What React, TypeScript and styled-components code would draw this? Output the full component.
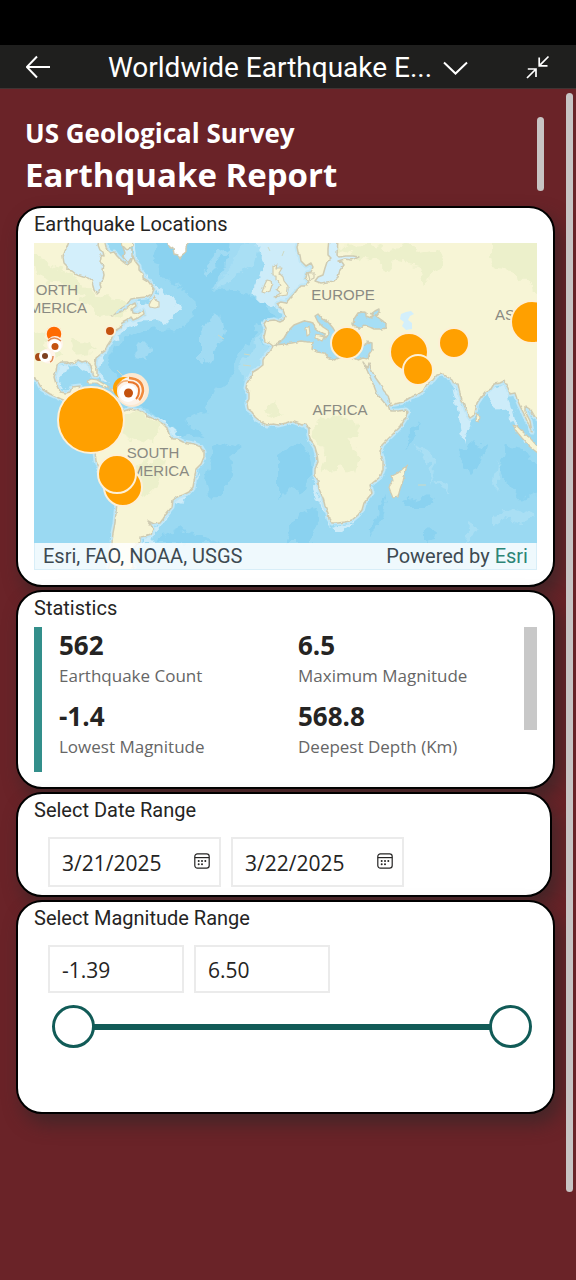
import React, { useState } from "react";
import styled, { createGlobalStyle } from "styled-components";

const GlobalStyle = createGlobalStyle`
  *, *::before, *::after { box-sizing: border-box; }
  body {
    margin: 0;
    background: #6a2328;
    color: #252423;
    font-family: "Open Sans", "Noto Sans", sans-serif;
  }
  h1, h2, p, dl, dd, dt { margin: 0; font-weight: inherit; }
  button { border: 0; padding: 0; background: none; color: inherit; font: inherit; cursor: pointer; }
`;

const Screen = styled.div`
  min-height: 100vh;
  display: flex;
  flex-direction: column;
`;

const StatusBar = styled.div`
  height: 45px;
  background: #000;
`;

const AppBar = styled.header`
  display: flex;
  align-items: center;
  height: 44px;
  padding: 0 26px;
  background: #1f1f1e;
  border-bottom: 1px solid #403433;
  color: #fff;
`;

const IconButton = styled.button`
  display: flex;
  align-items: center;
  justify-content: center;
`;

const TitleButton = styled.button`
  flex: 1;
  display: flex;
  align-items: center;
  justify-content: center;
  gap: 11px;
  padding-top: 2px;
  font-family: Roboto, sans-serif;
  font-size: 28px;
  line-height: 36px;
  white-space: nowrap;
`;

const Report = styled.div`
  flex: 1;
  display: flex;
  align-items: flex-start;
  gap: 11px;
  padding: 0 3px 0 16px;
`;

const Content = styled.main`
  flex: 1;
  min-width: 0;
  display: flex;
  flex-direction: column;
  gap: 3px;
`;

const PageScrollThumb = styled.div`
  width: 7px;
  height: 1099px;
  margin-top: 4px;
  border-radius: 4px;
  background: #c8c4c4;
  position: relative;
`;

const ReportHeader = styled.div`
  display: flex;
  justify-content: space-between;
  align-items: flex-start;
  padding: 26px 11px 4px 9px;
  color: #fff;
  font-weight: 700;
`;

const Agency = styled.p`
  font-size: 26px;
  line-height: 36px;
`;

const ReportTitle = styled.h1`
  font-size: 33px;
  line-height: 48px;
  font-weight: 700;
`;

const HeaderScrollThumb = styled.div`
  width: 7px;
  height: 74px;
  margin-top: 2px;
  border-radius: 4px;
  background: #c8c4c4;
`;

const Card = styled.section<{ $bottom: number; $inset?: number }>`
  margin-right: ${(p) => p.$inset ?? 0}px;
  padding: 4px 16px ${(p) => p.$bottom}px;
  border: 2px solid #000;
  border-radius: 26px;
  background: #fff;
  box-shadow: 6px 10px 18px rgba(52, 38, 40, 0.7);
`;

const CardTitle = styled.h2`
  font-family: Roboto, sans-serif;
  font-size: 20px;
  line-height: 24px;
`;

const MapFrame = styled.div`
  position: relative;
  margin-top: 7px;
  background: #9ad9f2;
`;

const MapDrawing = styled.svg`
  display: block;
  width: 100%;
`;

const Attribution = styled.div`
  position: absolute;
  left: 0;
  right: 0;
  bottom: 0;
  display: flex;
  justify-content: space-between;
  padding: 0 8px;
  background: rgba(255, 255, 255, 0.84);
  border: 1px solid #d8eef8;
  border-top: 0;
  color: #3d4a52;
  font-family: Roboto, sans-serif;
  font-size: 20px;
  line-height: 26px;
`;

const EsriLink = styled.a`
  color: #2c8577;
  text-decoration: none;
`;

const StatsPanel = styled.div`
  display: flex;
  align-items: flex-start;
  margin-top: 7px;
`;

const AccentBar = styled.div`
  width: 8px;
  height: 145px;
  margin-right: 17px;
  background: #338f8b;
`;

const StatsGrid = styled.dl`
  flex: 1;
  display: grid;
  grid-template-columns: 239px 1fr;
  row-gap: 10px;
`;

const Stat = styled.div`
  display: flex;
  flex-direction: column-reverse;
`;

const StatValue = styled.dd`
  font-size: 26px;
  line-height: 37px;
  font-weight: 700;
`;

const StatLabel = styled.dt`
  font-size: 17px;
  line-height: 24px;
  color: #666;
`;

const StatsScrollThumb = styled.div`
  width: 13px;
  height: 103px;
  background: #c8c8c8;
`;

const FieldRow = styled.div`
  display: flex;
  gap: 10px;
  margin-top: 15px;
  padding-left: 14px;
`;

const Field = styled.div<{ $width: number; $height: number }>`
  display: flex;
  align-items: center;
  width: ${(p) => p.$width}px;
  height: ${(p) => p.$height}px;
  padding: 0 9px 0 12px;
  border: 2px solid #ebebeb;
`;

const FieldInput = styled.input`
  flex: 1;
  min-width: 0;
  height: 100%;
  padding: 1px 0 0;
  border: 0;
  outline: 0;
  background: transparent;
  color: #252423;
  font-family: "Open Sans", "Noto Sans", sans-serif;
  font-size: 21px;
`;

const SliderGroup = styled.div`
  display: grid;
  align-items: center;
  margin: 12px 5px 0 18px;
`;

const SliderTrack = styled.div`
  grid-area: 1 / 1;
  height: 6px;
  margin: 0 20px;
  background: #115b57;
`;

const SliderInput = styled.input`
  grid-area: 1 / 1;
  width: 100%;
  height: 43px;
  margin: 0;
  appearance: none;
  background: transparent;
  pointer-events: none;

  &::-webkit-slider-runnable-track {
    height: 43px;
    background: transparent;
  }
  &::-webkit-slider-thumb {
    appearance: none;
    width: 43px;
    height: 43px;
    border: 3px solid #115b57;
    border-radius: 50%;
    background: #fff;
    pointer-events: auto;
  }
`;

const BackIcon = () => (
  <svg width="24" height="24" viewBox="0 0 24 24" fill="none" stroke="currentColor" strokeWidth="2">
    <path d="M11 1.5 0.8 12 11 22.5M1 12H24" />
  </svg>
);

const ChevronIcon = () => (
  <svg width="25" height="14" viewBox="0 0 25 14" fill="none" stroke="currentColor" strokeWidth="2">
    <path d="M1 1.5 12.5 12.5 24 1.5" />
  </svg>
);

const CollapseIcon = () => (
  <svg width="24" height="24" viewBox="0 0 24 24" fill="none" stroke="currentColor" strokeWidth="1.7">
    <path d="M22.5 1.5 13.2 10.8M13.2 2.6V10.8H21.5M1 23 10 14M1.8 14H10V22" />
  </svg>
);

const CalendarIcon = () => (
  <svg width="16" height="18" viewBox="0 0 16 18" fill="none" stroke="#252423" strokeWidth="1.2">
    <rect x="0.8" y="0.8" width="14.4" height="14.4" rx="2.6" />
    <path d="M0.8 4.6H15.2" />
    <g fill="#252423" stroke="none">
      <circle cx="4.7" cy="8" r="1" />
      <circle cx="8" cy="8" r="1" />
      <circle cx="11.3" cy="8" r="1" />
      <circle cx="4.7" cy="11.2" r="1" />
      <circle cx="8" cy="11.2" r="1" />
    </g>
  </svg>
);

const NORTH_AMERICA =
  "M-4 -4H70L72 5 77 10 80 9 83 13 88 18 93 22 97 19 99 13 101 18 105 23 105 27 109 31 109 35 114 38 117 42 120 46 118 51 112 54 103 55 97 56 93 61 85 66 78 73 88 69 96 63 101 60 102 63 98 66 99 70 104 71 109 67 110 71 104 75 99 77 97 74 92 78 88 80 86 85 80 88 79 92 77 97 73 103 71 108 67 111 62 115 61 121 63 127 63 133 60 133 58 127 56 121 52 118 48 119 44 117 41 120 37 121 33 119 27 119 23 122 22 128 20 134 22 141 26 149 32 150 36 149 38 144 46 143 44 149 43 153 52 154 53 162 58 168 68 168 70 174 58 172 48 166 40 161 27 156 16 151 8 146 4 139 -4 131Z";
const SOUTH_AMERICA =
  "M58 172 72 166 83 167 90 168 96 166 109 169 114 174 123 177 129 181 133 185 135 191 139 196 143 196 149 199 160 201 167 204 170 209 170 214 167 221 162 226 161 233 159 244 155 249 149 252 143 254 139 257 138 264 133 270 129 276 126 280 120 281 114 278 117 282 119 286 117 291 111 293 106 294 106 299 100 304 98 316 100 330H74L77 312 78 300 79 290 81 280 82 270 83 260 76 251 70 243 66 228 62 218 61 208 64 200 60 185Z";
const OLD_WORLD =
  "M266 -4 263 4 264 9 266 12 267 18 272 23 277 20 279 24 277 29 273 30 272 35 275 39 271 43 267 43 263 47 260 51 256 55 252 60 247 59 243 61 245 64 249 67 251 72 250 77 246 79 240 77 232 78 230 81 232 85 231 90 230 94 231 99 235 100 239 103 236 108 231 113 229 117 229 122 224 126 219 129 216 135 213 140 212 145 215 150 215 156 213 160 214 166 218 169 221 174 227 179 233 182 239 181 244 182 252 180 257 178 263 180 268 182 272 181 275 186 275 192 277 198 281 204 283 211 284 219 281 226 281 232 284 238 285 246 289 255 291 263 294 270 295 276 298 280 304 280 311 279 318 277 324 272 328 267 330 260 334 255 338 250 336 242 341 238 346 234 349 227 349 218 346 208 348 202 354 196 360 190 366 184 371 176 374 169 372 167 365 168 356 168 354 162 361 161 369 159 377 154 383 152 389 148 393 141 399 137 403 132 409 131 412 133 418 137 420 141 424 141 426 150 428 157 431 164 434 172 436 175 439 173 441 170 443 160 447 154 451 149 457 146 460 141 466 140 470 138 474 145 476 151 481 150 483 156 486 163 490 171 494 180 498 189 496 178 491 168 491 163 497 167 501 174 507 178V-4Z";

const SEAS = [
  // Hudson Bay
  "M36 -4 33 4 31 8 29 14 30 20 33 23 33 27 38 28 43 32 49 34 54 35 58 38 59 43 60 47 63 51 66 48 67 45 66 40 69 36 70 32 69 27 70 23 66 19 67 15 66 12 70 13 69 9 66 7 64 2 65 -4Z",
  // Baltic
  "M295 -4 294 6 294 12 297 15 293 19 291 25 289 32 284 34 281 38 287 40 293 39 300 38 304 34 306 27 310 22 308 19 304 18 311 16 318 17 325 14 319 13 312 13 305 14 303 12 304 -4Z",
  // Mediterranean
  "M240 102 246 99 250 95 253 90 256 86 260 82 265 80 270 78 276 79 279 80 281 85 286 89 291 91 291 96 294 92 295 88 289 84 284 79 281 73 284 71 288 76 294 79 299 85 303 92 313 100 324 104 330 102 334 99 338 100 338 107 335 111 334 116 329 115 324 117 312 112 300 117 293 114 290 110 283 109 278 106 279 99 273 99 267 98 258 100 250 101Z",
  // Black Sea
  "M319 81 320 76 324 70 329 69 332 70 332 73 337 75 340 72 337 71 341 68 345 66 345 69 342 73 349 78 352 81 352 85 347 86 340 86 336 84 330 82 326 85 321 84Z",
  // Red Sea
  "M329 119 331 122 334 125 335 120 337 126 341 134 346 141 350 148 354 152 356 161 353 163 348 157 343 151 340 143 336 134 333 127Z",
];

const ISLANDS = [
  "M115 62 117 58 121 53 121 57 125 59 125 64 121 65 116 64Z",
  "M52 139 57 136 63 137 70 141 75 144 70 145 63 140 55 140Z",
  "M76 146 82 146 85 149 79 149Z",
  "M86 -4 88 2 93 7 99 3 98 -4Z",
  "M239 23 243 21 242 25 248 25 245 30 249 34 250 38 254 43 254 47 253 52 246 53 240 54 247 50 243 47 246 42 244 38 242 37 242 32 239 32Z",
  "M231 41 233 37 237 38 238 42 236 48 231 50 228 49Z",
  "M373 222 371 230 369 238 366 246 364 254 359 255 357 250 355 244 359 238 358 233 364 230Z",
  "M479 182 484 184 489 189 497 196 505 205 505 211 495 203 488 195 483 189Z",
  "M443 170 446 174 445 179 442 178Z",
  "M272 85 275 83 276 91 273 93Z",
  "M282 92 290 94 288 98 282 95Z",
  "M274 30 280 30 280 35 276 37Z",
];

const DEEP = [
  "M122 -4H215L205 12 190 30 182 48 196 46 214 52 230 60 240 74 224 82 220 94 204 112 196 140 178 150 170 168 150 176 168 190 150 196 128 176 108 162 96 150 72 122 80 102 110 88 144 86 160 74 158 52 134 38 118 14Z",
  "M180 206 196 200 208 204 196 214 200 230 188 252 176 258 172 240 176 224Z",
  "M244 212 262 200 274 206 278 226 272 250 256 244 244 256Z",
  "M262 272 280 264 284 280 276 300H250Z",
  "M428 208 440 200 452 204 448 220 438 230 426 226Z",
  "M472 202 492 206 505 222V250L488 258 476 244 466 226Z",
  "M374 188 384 176 380 196 372 206Z",
  "M370 258 388 252 400 256 390 264 374 264Z",
  "M390 290 402 286 400 298 390 300Z",
  "M128 292 146 286 162 292 186 300H124Z",
  "M346 262 354 250 346 282 336 292Z",
];

const SHELF = [
  "M101 -4 104 14 112 32 122 42 132 50 146 62 148 68 138 74 134 80 122 76 104 78 92 88 80 94 70 114 66 128 76 140 64 134 58 116 84 82 98 62 108 62 122 50 104 22 96 -4Z",
  "M24 120 38 120 54 120 60 134 50 128 42 122 30 124 26 138 32 148 24 146 20 134Z",
  "M222 -4H266L264 12 280 24 282 38 262 48 252 60 252 76 244 66 228 60 218 50 222 40 230 22 224 10Z",
  "M126 174 140 188 150 196 134 192Z",
  "M166 230 160 246 138 262 132 278 122 286 120 300 106 300 112 292 126 278 140 254 156 244Z",
  "M282 220 284 246 298 282 320 278 304 290 290 272 280 246Z",
  "M418 136 430 162 436 176 430 200 426 176Z",
  "M452 150 468 142 476 156 482 180 496 200 484 192 474 172 462 164Z",
];

const RIDGES = [
  "M171 24 184 8 200 2 186 14 176 32Z",
  "M196 -4 226 -4 220 20 200 36 178 48 190 24Z",
  "M166 90 180 70 188 80 180 110 166 120Z",
  "M172 112 184 94 186 72 190 90 184 106 176 120Z",
  "M100 104 110 98 118 106 110 114 102 112Z",
  "M224 92 236 110 212 140 206 128Z",
  "M380 200 396 212 402 226 394 240 398 224 390 212Z",
  "M398 236 414 240 420 250 410 246Z",
  "M464 216 460 240 462 248 466 230Z",
  "M458 272 480 266 500 272 488 280 470 276 458 284Z",
  "M436 280 444 284 438 300 432 300Z",
];

const VEGETATION = [
  "M-4 10 20 22 44 34 58 50 66 54 80 56 98 62 86 74 78 70 66 72 56 60 30 44 0 30Z",
  "M-4 92 18 88 8 98 30 112 16 116 0 108Z",
  "M36 96 56 100 58 110 40 112Z",
  "M296 3 340 2 352 8 372 0 386 10 404 6 410 20 396 32 390 44 386 24 364 18 356 28 344 18 320 12Z",
  "M458 -4H505V50L490 38 478 28 462 26 458 12Z",
  "M278 178 300 172 322 180 324 192 316 198 326 214 322 232 306 224 286 228 292 208 280 202Z",
  "M80 170 104 168 128 182 118 200 96 196 76 186Z",
  "M100 222 132 214 124 246 108 254Z",
  "M230 164 240 160 248 170 238 176Z",
];

const Bubble = ({ x, y, r, fill = "#ffa000" }: { x: number; y: number; r: number; fill?: string }) => (
  <circle cx={x} cy={y} r={r + 1} fill={fill} stroke="#fdf0d6" strokeWidth="2" />
);

const WorldMap = () => (
  <MapDrawing viewBox="0 0 503 327" role="img" aria-label="Map of earthquake locations">
    <defs>
      <filter id="rough" x="-5%" y="-5%" width="110%" height="110%">
        <feTurbulence type="fractalNoise" baseFrequency="0.09" numOctaves="3" seed="4" />
        <feDisplacementMap in="SourceGraphic" scale="14" xChannelSelector="R" yChannelSelector="G" />
      </filter>
      <filter id="coast" x="-5%" y="-5%" width="110%" height="110%">
        <feTurbulence type="fractalNoise" baseFrequency="0.2" numOctaves="2" seed="9" />
        <feDisplacementMap in="SourceGraphic" scale="3" xChannelSelector="R" yChannelSelector="G" />
      </filter>
      <clipPath id="land">
        <path d={NORTH_AMERICA} />
        <path d={SOUTH_AMERICA} />
        <path d={OLD_WORLD} />
      </clipPath>
    </defs>
    <rect width="503" height="327" fill="#9ad9f2" />
    <g filter="url(#rough)">
      <g fill="#8ad2f0">{DEEP.map((d) => <path key={d} d={d} />)}</g>
      <g fill="#b8e5f7" opacity="0.5">{RIDGES.map((d) => <path key={d} d={d} />)}</g>
      <g fill="#cdecf9">{SHELF.map((d) => <path key={d} d={d} />)}</g>
    </g>
    <g filter="url(#coast)" strokeLinejoin="round">
      <g fill="none" stroke="#c0e7f7" strokeWidth="5">
        <path d={NORTH_AMERICA} />
        <path d={SOUTH_AMERICA} />
        <path d={OLD_WORLD} />
      </g>
      <g fill="#f7f5d6" stroke="#cfcbb2" strokeWidth="1.5">
        <path d={NORTH_AMERICA} />
        <path d={SOUTH_AMERICA} />
        <path d={OLD_WORLD} />
      </g>
    </g>
    <g clipPath="url(#land)">
      <g filter="url(#rough)" fill="#ecf0cb">
        {VEGETATION.map((d) => <path key={d} d={d} />)}
      </g>
    </g>
    <g filter="url(#coast)" strokeLinejoin="round" stroke="#cfcbb2" strokeWidth="1.5">
      {SEAS.map((d, i) => <path key={d} d={d} fill={i < 2 ? "#d3effb" : i === 4 ? "#c3e9f8" : "#a6def5"} />)}
      <path d="M88 1 92 6 98 6 98 14 94 20 89 14 91 10Z" fill="#d3effb" />
      <g fill="#f7f5d6" strokeWidth="1.2">{ISLANDS.map((d) => <path key={d} d={d} />)}</g>
      <path d="M133 -4 134 2 139 5 140 11 144 12 146 16 148 12 152 9 152 4 156 -4Z" fill="#fff" />
    </g>
    <path d="M366 76 367 71 372 69 377 68 380 71 376 73 374 77 378 80 378 86 372 87 368 83 370 79Z" fill="#d3effb" />
    <path
      d="M184 92 190 96M210 111 216 112M209 122 217 123M83 127 88 132 92 137M384 242 392 242M234 4 236 8M250 8 248 13"
      fill="none"
      stroke="#cdd9c4"
    />

    <g fontFamily="Liberation Sans, Arial, sans-serif" fontSize="15" fill="#8a8a82">
      <text x="44" y="52" textAnchor="end">ORTH</text>
      <text x="53" y="70" textAnchor="end">MERICA</text>
      <text x="309" y="57" textAnchor="middle">EUROPE</text>
      <text x="306" y="172" textAnchor="middle">AFRICA</text>
      <text x="119" y="215" textAnchor="middle">SOUTH</text>
      <text x="121" y="233" textAnchor="middle">AMERICA</text>
      <text x="461" y="77">ASIA</text>
    </g>

    <Bubble x={89} y={244} r={18} />
    <Bubble x={83} y={231} r={18} />
    <Bubble x={313} y={100} r={15} />
    <Bubble x={375} y={109} r={18} />
    <Bubble x={384} y={127} r={14} />
    <Bubble x={420} y={100} r={14} />
    <Bubble x={498} y={79} r={20} />
    <Bubble x={76} y={88} r={4} fill="#c4520f" />

    <circle cx="20" cy="91" r="8" fill="#ff6a00" stroke="#fdf0d6" strokeWidth="1.5" />
    <circle cx="21" cy="101" r="8" fill="#fff4ea" />
    <path d="M14 98Q20 92 27 98" fill="none" stroke="#e08a52" strokeWidth="1.5" />
    <circle cx="21" cy="103" r="6.5" fill="#fff" />
    <circle cx="21" cy="103.5" r="3.5" fill="#c4520f" />
    <circle cx="14" cy="113" r="7.5" fill="#fff4ea" />
    <circle cx="5" cy="114" r="4" fill="#a84c18" />
    <path d="M16 119Q19 118 19 113" fill="none" stroke="#e08a52" strokeWidth="1.5" />
    <circle cx="11" cy="113" r="6" fill="#fff" />
    <circle cx="11" cy="113" r="3" fill="#7d4020" />

    <circle cx="98" cy="147" r="17" fill="#fbe9d2" />
    <circle cx="90" cy="145" r="11" fill="#ffa000" />
    <circle cx="97" cy="148" r="14" fill="#fdf3e8" />
    <path d="M95 135Q109 136 109 148Q108 154 105 157" fill="none" stroke="#f08a3c" strokeWidth="2.5" />
    <path d="M94 139Q105 139 105 148Q105 153 102 156" fill="none" stroke="#e8762c" strokeWidth="1.8" />
    <path d="M83 144Q87 137 94 138" fill="none" stroke="#f2b27a" strokeWidth="1.5" />
    <circle cx="94" cy="150" r="9" fill="#fff" />
    <circle cx="94.5" cy="150" r="4.5" fill="#c4520f" />
    <Bubble x={57} y={177} r={32} />
  </MapDrawing>
);

const STATS = [
  { label: "Earthquake Count", value: "562" },
  { label: "Maximum Magnitude", value: "6.5" },
  { label: "Lowest Magnitude", value: "-1.4" },
  { label: "Deepest Depth (Km)", value: "568.8" },
];

const MIN_MAG = -1.39;
const MAX_MAG = 6.5;

const DateField = ({ label, initial }: { label: string; initial: string }) => (
  <Field $width={173} $height={50}>
    <FieldInput type="text" aria-label={label} defaultValue={initial} />
    <IconButton type="button" aria-label={`${label} calendar`}>
      <CalendarIcon />
    </IconButton>
  </Field>
);

export default function App() {
  const [low, setLow] = useState(MIN_MAG);
  const [high, setHigh] = useState(MAX_MAG);

  return (
    <Screen>
      <GlobalStyle />
      <StatusBar />
      <AppBar>
        <IconButton type="button" aria-label="Back">
          <BackIcon />
        </IconButton>
        <TitleButton type="button">
          Worldwide Earthquake E...
          <ChevronIcon />
        </TitleButton>
        <IconButton type="button" aria-label="Exit full screen">
          <CollapseIcon />
        </IconButton>
      </AppBar>
      <Report>
        <Content>
          <ReportHeader>
            <div>
              <Agency>US Geological Survey</Agency>
              <ReportTitle>Earthquake Report</ReportTitle>
            </div>
            <HeaderScrollThumb />
          </ReportHeader>

          <Card $bottom={15}>
            <CardTitle>Earthquake Locations</CardTitle>
            <MapFrame>
              <WorldMap />
              <Attribution>
                <span>Esri, FAO, NOAA, USGS</span>
                <span>
                  Powered by <EsriLink href="#esri">Esri</EsriLink>
                </span>
              </Attribution>
            </MapFrame>
          </Card>

          <Card $bottom={15}>
            <CardTitle>Statistics</CardTitle>
            <StatsPanel>
              <AccentBar />
              <StatsGrid>
                {STATS.map((s) => (
                  <Stat key={s.label}>
                    <StatLabel>{s.label}</StatLabel>
                    <StatValue>{s.value}</StatValue>
                  </Stat>
                ))}
              </StatsGrid>
              <StatsScrollThumb />
            </StatsPanel>
          </Card>

          <Card $bottom={8} $inset={3}>
            <CardTitle>Select Date Range</CardTitle>
            <FieldRow>
              <DateField label="Start date" initial="3/21/2025" />
              <DateField label="End date" initial="3/22/2025" />
            </FieldRow>
          </Card>

          <Card $bottom={64}>
            <CardTitle>Select Magnitude Range</CardTitle>
            <FieldRow>
              <Field $width={136} $height={48}>
                <FieldInput
                  type="text"
                  aria-label="Minimum magnitude"
                  value={low.toFixed(2)}
                  onChange={(e) => setLow(Number(e.target.value) || 0)}
                />
              </Field>
              <Field $width={136} $height={48}>
                <FieldInput
                  type="text"
                  aria-label="Maximum magnitude"
                  value={high.toFixed(2)}
                  onChange={(e) => setHigh(Number(e.target.value) || 0)}
                />
              </Field>
            </FieldRow>
            <SliderGroup>
              <SliderTrack />
              <SliderInput
                type="range"
                aria-label="Minimum magnitude slider"
                min={MIN_MAG}
                max={MAX_MAG}
                step={0.01}
                value={low}
                onChange={(e) => setLow(Math.min(Number(e.target.value), high))}
              />
              <SliderInput
                type="range"
                aria-label="Maximum magnitude slider"
                min={MIN_MAG}
                max={MAX_MAG}
                step={0.01}
                value={high}
                onChange={(e) => setHigh(Math.max(Number(e.target.value), low))}
              />
            </SliderGroup>
          </Card>
        </Content>
        <PageScrollThumb />
      </Report>
    </Screen>
  );
}
